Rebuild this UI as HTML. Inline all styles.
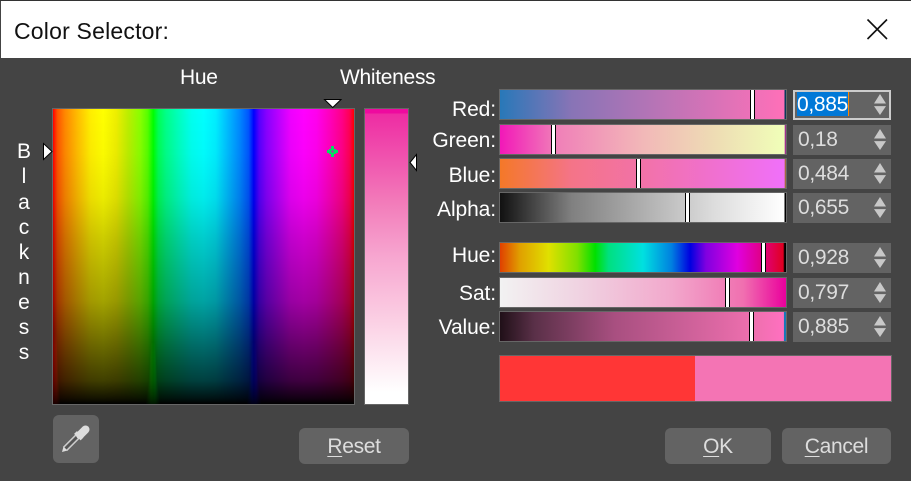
<!DOCTYPE html>
<html><head><meta charset="utf-8">
<style>
html,body{margin:0;padding:0;width:911px;height:481px;overflow:hidden;background:#444}
body{position:relative;font-family:"Liberation Sans",sans-serif;font-size:21px;color:#fff}
div{position:absolute;box-sizing:border-box}
.lb{text-align:right;left:400px;width:96px;height:28px;line-height:28px;white-space:nowrap;letter-spacing:-.1px}
.s{left:499px;width:288px;height:31px;border:1px solid #666}
.s i{position:absolute;top:0;bottom:0;width:5px;background:#fff;border-left:1px solid #000;border-right:1px solid #000;box-sizing:border-box}
.sp{left:793px;width:98px;height:30px;background:#636363;color:#ddd;padding-left:5px;line-height:30px;font-size:21px;letter-spacing:-.3px}
.sp:after{content:"";position:absolute;left:81px;top:4px;width:12px;height:21px;background:#c8c8c8;clip-path:polygon(50% 0,100% 45%,0 45%,0 58%,100% 58%,50% 100%,0 58%,0 45%)}
.sp.sel:after{left:79px;top:2px}
.b{background:#636363;border-radius:6px;text-align:center;color:#ddd;top:428px;height:36px;line-height:37px;letter-spacing:-.3px}
.b u{text-underline-offset:3px;text-decoration-thickness:1px}
.v{left:13px;width:22px;text-align:center;height:24px;line-height:24px}
.col{top:109px;height:295px;mix-blend-mode:lighten;-webkit-mask-image:linear-gradient(to bottom,transparent 72%,rgba(0,0,0,.9) 80%,rgba(0,0,0,.5) 92%,rgba(0,0,0,.2) 100%);mask-image:linear-gradient(to bottom,transparent 72%,rgba(0,0,0,.9) 80%,rgba(0,0,0,.5) 92%,rgba(0,0,0,.2) 100%)}
</style></head><body>
<div style="left:0;top:0;width:911px;height:1px;background:#333"></div>
<div style="left:1px;top:1px;width:910px;height:57px;background:#fff"></div>
<div style="left:14px;top:16px;color:#111;font-size:23px;letter-spacing:.2px;line-height:30px;white-space:nowrap">Color Selector:</div>
<svg style="position:absolute;left:866px;top:18px" width="24" height="24"><path d="M1.5 1.5L21 21M21 1.5L1.5 21" stroke="#111" stroke-width="1.6" fill="none"/></svg>

<div style="left:180px;top:64px;line-height:28px;white-space:nowrap;letter-spacing:-.3px">Hue</div>
<div style="left:340px;top:64px;line-height:28px;white-space:nowrap;letter-spacing:-.3px">Whiteness</div>
<div class="v" style="top:140px">B</div>
<div class="v" style="top:165px">l</div>
<div class="v" style="top:191px">a</div>
<div class="v" style="top:216px">c</div>
<div class="v" style="top:241px">k</div>
<div class="v" style="top:266px">n</div>
<div class="v" style="top:291px">e</div>
<div class="v" style="top:316px">s</div>
<div class="v" style="top:341px">s</div>

<!-- hue box -->
<div style="left:52px;top:108px;width:303px;height:297px;border:1px solid #666;background:
linear-gradient(to bottom,rgba(0,0,0,0) 0%,rgba(0,0,0,.02) 15%,rgba(0,0,0,.08) 30%,rgba(0,0,0,.2) 44%,rgba(0,0,0,.36) 65%,rgba(0,0,0,.55) 78%,rgba(0,0,0,.75) 92%,rgba(0,0,0,.92) 98%,#000 100%),
linear-gradient(to right,#f00 0%,#f50 1.5%,#f80 4%,#fb0 8%,#fe0 12.5%,#ff0 16.7%,#ee0 21%,#be0 25%,#8f0 29%,#5f0 31.5%,#0f0 33.3%,#0f5 35%,#0f8 37.5%,#0fb 41.5%,#0fe 46%,#0ff 50%,#0ef 54%,#0bf 58%,#08f 62%,#05f 65%,#00f 66.7%,#50f 68.5%,#80f 71%,#b0f 75%,#e0f 79%,#f0f 83.3%,#f0e 87.5%,#f0b 92%,#f08 96%,#f05 98.5%,#f00 100%)"></div>
<div class="col" style="left:53px;width:7px;background:linear-gradient(to right,#800000,#800000 50%,#200000)"></div>
<div class="col" style="left:146px;width:14px;background:linear-gradient(to right,#001000,#007000 35%,#007000 65%,#001000)"></div>
<div class="col" style="left:247px;width:14px;background:linear-gradient(to right,#000010,#000070 35%,#000070 65%,#000010)"></div>
<!-- whiteness -->
<div style="left:364px;top:108px;width:45px;height:297px;border:1px solid #666;background:linear-gradient(to bottom,#ee0a9f 0,#ee0a9f 4px,#ee2ca3 5px,#f27cba 32%,#f7a6d0 50%,#fbd0e4 72%,#fff 96%,#fff 100%)"></div>

<svg style="position:absolute;left:0;top:0" width="911" height="481">
<path d="M324.5 99.5H341L332.7 107.5Z" fill="#fff" stroke="#000"/>
<path d="M43.5 143.5V159.5L52 151.5Z" fill="#fff" stroke="#000"/>
<path d="M416.5 154.5V170.5L410 162.5Z" fill="#fff" stroke="#000"/>
<path d="M331 146h3v3h2v1h2v3h-2v1h-2v3h-3v-3h-2v-1h-2v-3h2v-1h2z" fill="#00e060"/>
<rect x="331.500" y="150.500" width="2" height="2" fill="#d010b0"/>
</svg>

<!-- dropper button -->
<div style="left:53px;top:415px;width:46px;height:48px;background:#636363;border-radius:6px"></div>
<svg style="position:absolute;left:0;top:0" width="911" height="481">
<path d="M65 449L78 436" stroke="#ccc" stroke-width="6"/>
<path d="M65 449L78 436" stroke="#555" stroke-width="3"/>
<path d="M62 452L63.500 446.500L67.500 450.500Z" fill="#ddd"/>
<path d="M75.500 432.500L82 439" stroke="#ddd" stroke-width="4"/>
<path d="M80 435L85.500 429.500" stroke="#ddd" stroke-width="8" stroke-linecap="round"/>
</svg>
<div class="b" style="left:299px;width:110px"><u>R</u>eset</div>
<div class="b" style="left:665px;width:106px"><u>O</u>K</div>
<div class="b" style="left:782px;width:109px"><u>C</u>ancel</div>

<!-- labels -->
<div class="lb" style="top:96px">Red:</div>
<div class="lb" style="top:127px">Green:</div>
<div class="lb" style="top:162px">Blue:</div>
<div class="lb" style="top:196px">Alpha:</div>
<div class="lb" style="top:242px">Hue:</div>
<div class="lb" style="top:280px">Sat:</div>
<div class="lb" style="top:314px">Value:</div>

<!-- sliders -->
<div class="s" style="top:89px;background:linear-gradient(to right,#2878b8,#8874b6 25%,#b874b6 55%,#ff70b8 99.4%,#0a3a5a 99.5%)"><i style="left:250px"></i></div>
<div class="s" style="top:124px;background:linear-gradient(to right,#f218b8,#f080b8 20%,#f2b8b8 50%,#eedcb4 75%,#f0ffb8 99.5%,#a03090 99.6%)"><i style="left:51px"></i></div>
<div class="s" style="top:158px;background:linear-gradient(to right,#f47828,#f47488 25%,#f272a8 50%,#f070d0 75%,#f070fa 99.5%,#a06a40 99.6%)"><i style="left:136px"></i></div>
<div class="s" style="top:192px;background:linear-gradient(to right,#111,#808080 25%,#b8b8b8 55%,#ddd 75%,#fff 99.4%,#000 99.5%)"><i style="left:185px"></i></div>

<div class="s" style="top:242px;background:linear-gradient(to right,#e04000,#e0a000 7%,#e0e000 17%,#80e000 27%,#00e000 33.3%,#00e080 38%,#00e0e0 50%,#0080e0 60%,#0000e0 66.5%,#8000e0 72%,#e000e0 83%,#e00080 92%,#e00020 99%,#000 99.5%)"><i style="left:261px"></i></div>
<div class="s" style="top:277px;background:linear-gradient(to right,#f2f2f2,#f0d0e0 30%,#f2a8cc 60%,#f070b0 85%,#ea009c 100%)"><i style="left:225px"></i></div>
<div class="s" style="top:311px;background:linear-gradient(to right,#201018,#5a3048 12%,#a84f80 40%,#cc6098 65%,#f070b0 90%,#ff70c0 99.2%,#1878b8 99.3%)"><i style="left:249px"></i></div>

<!-- spinners -->
<div class="sp sel" style="top:90px;border:2px solid #ccc;padding-left:2px;line-height:26px"><span style="background:#0078d7;color:#fff;display:inline-block;height:24px;line-height:25px;border-right:1px solid #f80;margin-top:0">0,885</span></div>
<div class="sp" style="top:125px">0,18</div>
<div class="sp" style="top:159px">0,484</div>
<div class="sp" style="top:193px">0,655</div>
<div class="sp" style="top:243px">0,928</div>
<div class="sp" style="top:278px">0,797</div>
<div class="sp" style="top:312px">0,885</div>

<!-- swatch -->
<div style="left:499px;top:355px;width:393px;height:47px;border:1px solid #666;background:linear-gradient(to right,#ff3636 0,#ff3636 195px,#f474b4 195px)"></div>
</body></html>
